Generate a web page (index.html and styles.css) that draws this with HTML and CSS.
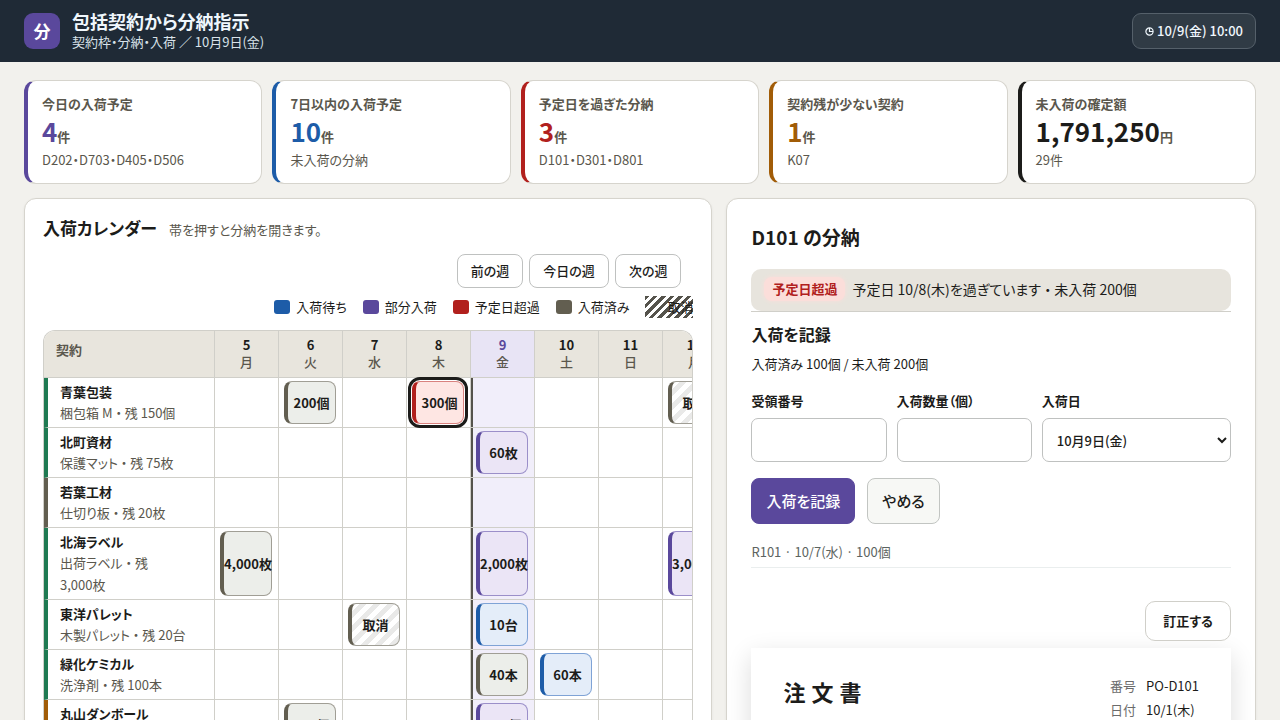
FILE: index.html
```html
<!DOCTYPE html>
<html lang="ja">
<head>
<meta charset="utf-8">
<meta name="viewport" content="width=device-width, initial-scale=1">
<title>包括契約から分納指示</title>
<link rel="stylesheet" href="styles.css">
</head>
<body>
<header class="topbar">
  <div class="logo" aria-hidden="true">分</div>
  <div class="brand">
    <h1 class="brand-title">包括契約から分納指示</h1>
    <p class="brand-sub">契約枠・分納・入荷 ／ 10月9日(金)</p>
  </div>
  <div class="clock">
    <svg class="clock-icon" viewBox="0 0 9 9" aria-hidden="true"><circle cx="4.5" cy="4.5" r="3.6"/><path d="M4.5 1v3.5H8"/></svg>
    <span>10/9(金) 10:00</span>
  </div>
</header>
<main class="page">
  <section class="kpis">
    <article class="kpi kpi-violet"><h2 class="kpi-label">今日の入荷予定</h2><p class="kpi-value"><strong>4</strong>件</p><p class="kpi-note">D202・D703・D405・D506</p></article>
    <article class="kpi kpi-blue"><h2 class="kpi-label">7日以内の入荷予定</h2><p class="kpi-value"><strong>10</strong>件</p><p class="kpi-note">未入荷の分納</p></article>
    <article class="kpi kpi-red"><h2 class="kpi-label">予定日を過ぎた分納</h2><p class="kpi-value"><strong>3</strong>件</p><p class="kpi-note">D101・D301・D801</p></article>
    <article class="kpi kpi-amber"><h2 class="kpi-label">契約残が少ない契約</h2><p class="kpi-value"><strong>1</strong>件</p><p class="kpi-note">K07</p></article>
    <article class="kpi kpi-ink"><h2 class="kpi-label">未入荷の確定額</h2><p class="kpi-value"><strong>1,791,250</strong>円</p><p class="kpi-note">29件</p></article>
  </section>

  <div class="columns">
    <section class="panel calendar">
      <div class="cal-head">
        <h2 class="cal-title">入荷カレンダー</h2>
        <p class="cal-hint">帯を押すと分納を開きます。</p>
      </div>
      <div class="weeks">
        <button class="week-btn" type="button">前の週</button>
        <button class="week-btn" type="button">今日の週</button>
        <button class="week-btn" type="button">次の週</button>
      </div>
      <ul class="legend">
        <li class="key key-wait">入荷待ち</li>
        <li class="key key-part">部分入荷</li>
        <li class="key key-late">予定日超過</li>
        <li class="key key-done">入荷済み</li>
        <li class="key key-void">取消</li>
      </ul>
      <div class="scroller">
        <table class="grid">
          <colgroup><col class="col-name"><col span="8" class="col-day"></colgroup>
          <thead>
            <tr>
              <th class="corner" scope="col">契約</th>
              <th class="day" scope="col">5<span>月</span></th>
              <th class="day" scope="col">6<span>火</span></th>
              <th class="day" scope="col">7<span>水</span></th>
              <th class="day" scope="col">8<span>木</span></th>
              <th class="day day-today" scope="col">9<span>金</span></th>
              <th class="day" scope="col">10<span>土</span></th>
              <th class="day" scope="col">11<span>日</span></th>
              <th class="day" scope="col">12<span>月</span></th>
            </tr>
          </thead>
          <tbody>
            <tr>
              <th class="name ok" scope="row">青葉包装<span>梱包箱 M ・ 残 150個</span></th>
              <td></td><td><button class="chip done" type="button">200個</button></td><td></td><td><button class="chip late selected" type="button">300個</button></td><td class="today"></td><td></td><td></td><td><button class="chip void" type="button">取消</button></td>
            </tr>
            <tr>
              <th class="name ok" scope="row">北町資材<span>保護マット ・ 残 75枚</span></th>
              <td></td><td></td><td></td><td></td><td class="today"><button class="chip part" type="button">60枚</button></td><td></td><td></td><td></td>
            </tr>
            <tr>
              <th class="name closed" scope="row">若葉工材<span>仕切り板 ・ 残 20枚</span></th>
              <td></td><td></td><td></td><td></td><td class="today"></td><td></td><td></td><td></td>
            </tr>
            <tr>
              <th class="name ok" scope="row">北海ラベル<span>出荷ラベル ・ 残 3,000枚</span></th>
              <td><button class="chip done" type="button">4,000枚</button></td><td></td><td></td><td></td><td class="today"><button class="chip part" type="button">2,000枚</button></td><td></td><td></td><td><button class="chip part" type="button">3,000枚</button></td>
            </tr>
            <tr>
              <th class="name ok" scope="row">東洋パレット<span>木製パレット ・ 残 20台</span></th>
              <td></td><td></td><td><button class="chip void" type="button">取消</button></td><td></td><td class="today"><button class="chip wait" type="button">10台</button></td><td></td><td></td><td></td>
            </tr>
            <tr>
              <th class="name ok" scope="row">緑化ケミカル<span>洗浄剤 ・ 残 100本</span></th>
              <td></td><td></td><td></td><td></td><td class="today"><button class="chip done" type="button">40本</button></td><td><button class="chip wait" type="button">60本</button></td><td></td><td></td>
            </tr>
            <tr>
              <th class="name low" scope="row">丸山ダンボール<span>段ボール ・ 残 50個</span></th>
              <td></td><td><button class="chip done" type="button">500個</button></td><td></td><td></td><td class="today"><button class="chip part" type="button">400個</button></td><td></td><td></td><td></td>
            </tr>
          </tbody>
        </table>
      </div>
    </section>

    <section class="panel detail">
      <h2 class="detail-title">D101 の分納</h2>
      <div class="status-wrap">
        <div class="status"><strong class="tag">予定日超過</strong><span class="status-text">予定日 10/8(木)を過ぎています ・ 未入荷 200個</span></div>
      </div>
      <form class="receive">
        <h3 class="receive-title">入荷を記録</h3>
        <p class="receive-sum">入荷済み 100個 / 未入荷 200個</p>
        <div class="fields">
          <div class="field"><label for="slip">受領番号</label><input class="control" id="slip" type="text"></div>
          <div class="field"><label for="qty">入荷数量（個）</label><input class="control" id="qty" type="text" inputmode="numeric"></div>
          <div class="field"><label for="date">入荷日</label><select class="control" id="date"><option>10月9日(金)</option></select></div>
        </div>
        <div class="actions">
          <button class="btn btn-primary" type="button">入荷を記録</button>
          <button class="btn" type="button">やめる</button>
        </div>
      </form>
      <p class="history">R101 · 10/7(水) · 100個</p>
      <div class="amend"><button class="amend-btn" type="button">訂正する</button></div>
      <article class="paper">
        <h3 class="paper-title">注文書</h3>
        <dl class="paper-meta">
          <dt>番号</dt><dd>PO-D101</dd>
          <dt>日付</dt><dd>10/1(木)</dd>
        </dl>
      </article>
    </section>
  </div>
</main>
</body>
</html>
```
FILE: styles.css
```css
* { box-sizing: border-box; }
html { height: 100%; overflow: hidden; }
body {
  margin: 0;
  height: 100%;
  overflow: hidden;
  background: #f2f1ed;
  color: #1c1c1a;
  font: 13px/22px "Noto Sans CJK JP", "Noto Sans", sans-serif;
  font-feature-settings: "palt";
}
h1, h2, h3, p, ul, dl, dd { margin: 0; padding: 0; }
button, input, select { font: inherit; font-feature-settings: inherit; color: inherit; }

.topbar {
  display: flex;
  align-items: center;
  gap: 12px;
  height: 62px;
  padding: 0 24px;
  background: #1f2a36;
  color: #f0f7fd;
}
.logo {
  display: grid;
  place-items: center;
  width: 36px;
  height: 36px;
  border-radius: 9px;
  background: #5a489c;
  color: #fff;
  font-size: 17px;
  font-weight: 700;
}
.brand-title { font-size: 18px; line-height: 22px; font-weight: 700; }
.brand-sub { line-height: 20px; color: #d9e2ea; }
.clock {
  display: flex;
  align-items: center;
  gap: 3px;
  margin-left: auto;
  padding: 6px 12px;
  border: 1px solid #55606a;
  border-radius: 9px;
  background: #303b45;
  font-weight: 500;
}
.clock-icon { width: 9px; height: 9px; fill: none; stroke: currentColor; stroke-width: 1.2; }

.page { padding: 18px 24px 0; }
.kpis { display: grid; grid-template-columns: repeat(5, 1fr); gap: 10px; }
.kpi {
  padding: 12px 14px;
  border: 1px solid #d6d4cd;
  border-left: 4px solid var(--tone);
  border-radius: 12px;
  background: #fff;
  color: #5a574d;
}
.kpi-label { font-size: 13px; line-height: 21px; font-weight: 700; }
.kpi-value { margin-bottom: 2px; line-height: 20px; font-weight: 700; }
.kpi-value strong { font-size: 26px; line-height: 33px; font-weight: 700; color: var(--tone); }
.kpi-violet { --tone: #5a489c; }
.kpi-blue { --tone: #1d5ca8; }
.kpi-red { --tone: #b1201d; }
.kpi-amber { --tone: #a15c07; }
.kpi-ink { --tone: #1c1c1a; }

.columns { display: grid; grid-template-columns: minmax(0, 13fr) minmax(0, 10fr); gap: 14px; margin-top: 14px; }
.panel {
  border: 1px solid #d6d4cd;
  border-radius: 12px;
  background: #fff;
  box-shadow: 0 1px 3px rgba(30, 30, 20, 0.06);
}
.calendar { padding: 18px; }
.cal-head { display: flex; align-items: baseline; gap: 12px; }
.cal-title { font-size: 17px; line-height: 22px; font-weight: 700; }
.cal-hint { color: #5a574d; }
.weeks { display: flex; justify-content: flex-end; gap: 6px; margin-top: 13px; padding-right: 12px; }
.week-btn {
  height: 34px;
  padding: 0 13px;
  border: 1px solid #bfc1c0;
  border-radius: 8px;
  background: #fff;
  font-weight: 500;
}
.legend { display: flex; justify-content: flex-end; gap: 16px; margin: 8px 0 12px; list-style: none; }
.key { display: flex; align-items: center; gap: 6px; }
.key::before { content: ""; width: 16px; height: 14px; border-radius: 3px; background: var(--tone); }
.key-wait { --tone: #1d5ca8; }
.key-part { --tone: #5a489c; }
.key-late { --tone: #b1201d; }
.key-done { --tone: #625e50; }
.key-void { background: repeating-linear-gradient(135deg, #55534c 0 3px, #fff 3px 6px); }

.scroller { overflow: hidden; border: 1px solid #d0cfc9; border-bottom: 0; border-radius: 12px 12px 0 0; }
.grid { width: 683px; table-layout: fixed; border-collapse: separate; border-spacing: 0; }
.col-name { width: 171px; }
.col-day { width: 64px; }
.grid th, .grid td { border-right: 1px solid #d0cfc9; border-bottom: 1px solid #d0cfc9; }
.corner, .day { height: 47px; background: #e8e5dd; }
.corner { padding: 8px 12px 0; text-align: left; vertical-align: top; color: #5a574d; font-weight: 700; }
.day { padding: 5px 0 7px; line-height: 17px; font-weight: 700; }
.day span { display: block; color: #5a574d; font-weight: 500; }
.day-today { background: #e8e4f5; color: #5a489c; }
.name {
  padding: 4px 20px 3px 12px;
  border-left: 4px solid var(--tone);
  text-align: left;
  line-height: 20px;
  font-weight: 700;
  word-break: keep-all;
}
.name span { display: block; line-height: 22px; color: #5a574d; font-weight: 400; }
.ok { --tone: #1f7a52; }
.closed { --tone: #625e50; }
.low { --tone: #a15c07; }
.grid td { height: 1px; padding: 3px 6px 3px 5px; }
.grid .today { background: #f1eefa; box-shadow: inset 2px 0 #55534c; }
.chip {
  display: block;
  width: 100%;
  height: 100%;
  padding: 0;
  border: 1px solid var(--edge);
  border-left: 4px solid var(--tone);
  border-radius: 8px;
  background: var(--fill);
  font-weight: 700;
  line-height: 20px;
  white-space: nowrap;
}
.wait { --tone: #1d5ca8; --edge: #7fa3d6; --fill: #e4edf9; }
.part { --tone: #5a489c; --edge: #9b8fc9; --fill: #ebe5f6; }
.late { --tone: #b1201d; --edge: #d9827f; --fill: #fee6e3; }
.done { --tone: #625e50; --edge: #a09e95; --fill: #eceeea; }
.void { --tone: #625e50; --edge: #a09e95; --fill: repeating-linear-gradient(135deg, #fff 0 5px, #e9e9e8 5px 10px); }
.selected { outline: 3px solid #1c1c1a; outline-offset: 1px; }

.detail { padding: 24px; }
.detail-title { font-size: 19px; line-height: 28px; font-weight: 700; }
.status-wrap { margin-top: 18px; border-bottom: 1px solid #d0cfc9; }
.status {
  display: flex;
  align-items: center;
  gap: 7px;
  padding: 8px 13px 10px;
  border-radius: 10px;
  background: #e7e4dd;
}
.tag {
  padding: 1px 8px;
  border-radius: 8px;
  background: #fbdeda;
  box-shadow: 0 0 4px #fbdeda;
  color: #b1201d;
  font-weight: 700;
}
.status-text { font-size: 14px; }
.receive-title { margin-top: 11px; font-size: 16px; line-height: 22px; font-weight: 700; }
.receive-sum { margin-top: 8px; }
.fields { display: grid; grid-template-columns: 10fr 10fr 14fr; gap: 10px; margin-top: 15px; }
.field { display: flex; flex-direction: column; gap: 6px; min-width: 0; }
.field label { font-weight: 700; }
.control {
  width: 100%;
  min-width: 0;
  height: 44px;
  padding: 0 10px;
  border: 1px solid #bfc1c0;
  border-radius: 7px;
  background: #fff;
  font-weight: 500;
}
.actions { display: flex; gap: 12px; margin-top: 16px; }
.btn {
  height: 46px;
  padding: 0 14px;
  border: 1px solid #c2c5c2;
  border-radius: 8px;
  background: #f7f8f5;
  font-size: 15px;
  font-weight: 500;
}
.btn-primary { border-color: #5a489c; background: #5a489c; color: #fff; }
.history { margin-top: 16px; padding-bottom: 4px; border-bottom: 1px solid #eaeeee; line-height: 23px; color: #5c6461; }
.amend { display: flex; justify-content: flex-end; margin-top: 33px; }
.amend-btn {
  height: 40px;
  padding: 0 17px;
  border: 1px solid #d0cfc9;
  border-radius: 10px;
  background: #fff;
  font-weight: 700;
}
.paper {
  display: flex;
  justify-content: space-between;
  height: 400px;
  margin-top: 7px;
  padding: 26px 32px;
  background: #fff;
  box-shadow: 0 8px 24px rgba(0, 0, 0, 0.14);
}
.paper-title { font-size: 22px; line-height: 34px; font-weight: 700; letter-spacing: 6px; }
.paper-meta { display: grid; grid-template-columns: auto auto; gap: 0 10px; align-content: start; line-height: 24px; }
.paper-meta dt { color: #6b6b6b; }
```
